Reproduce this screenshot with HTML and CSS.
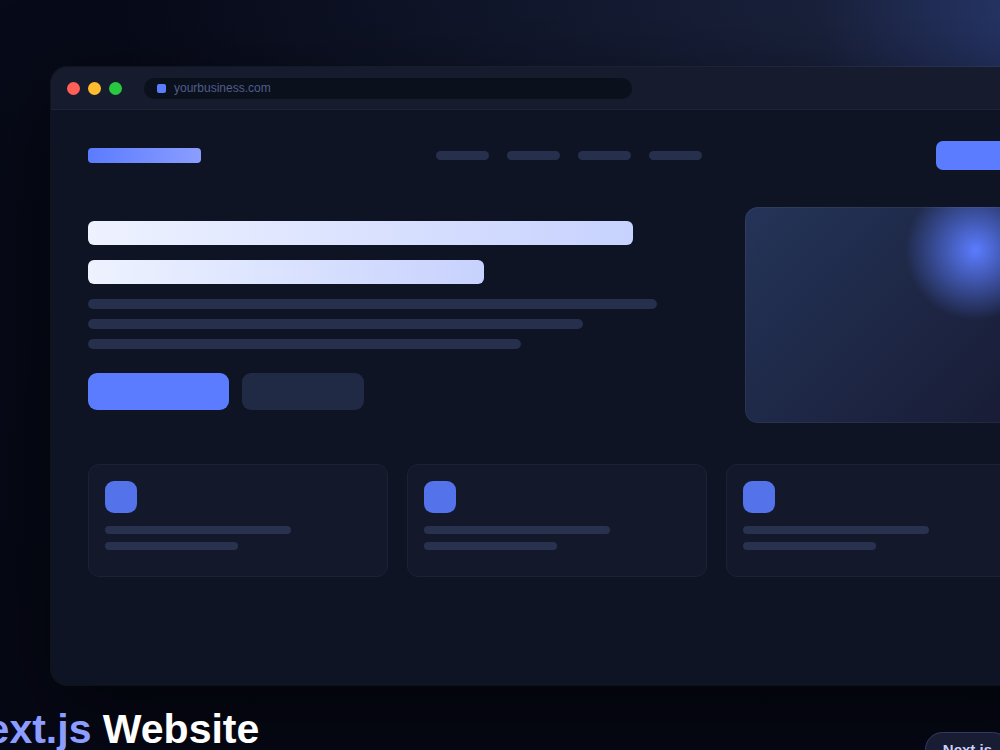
FILE: index.html
```html
<!DOCTYPE html>
<html lang="en">

<head>
  <meta charset="UTF-8">
  <meta name="viewport" content="width=device-width, initial-scale=1.0">
  <link rel="stylesheet" href="styles.css">
  <title>Next.js Website</title>
</head>

<body>
  <main class="stage">
    <div class="browser">
      <div class="bar">
        <div class="dots">
          <span class="dot red"></span>
          <span class="dot yellow"></span>
          <span class="dot green"></span>
        </div>
        <label class="url">
          <span class="favicon"></span>
          <input class="url-input" type="text" value="yourbusiness.com" aria-label="Address" readonly>
        </label>
      </div>

      <div class="site">
        <nav class="nav">
          <span class="logo"></span>
          <div class="links">
            <span class="link"></span>
            <span class="link"></span>
            <span class="link"></span>
            <span class="link"></span>
          </div>
          <button class="nav-btn" type="button" aria-label="Contact"></button>
        </nav>

        <section class="hero">
          <div class="copy">
            <span class="heading w88"></span>
            <span class="heading w64"></span>
            <div class="lines">
              <span class="line w92"></span>
              <span class="line w80"></span>
              <span class="line w70"></span>
            </div>
            <div class="actions">
              <button class="btn primary" type="button" aria-label="Start"></button>
              <button class="btn secondary" type="button" aria-label="More"></button>
            </div>
          </div>
          <div class="visual"></div>
        </section>

        <section class="cards">
          <div class="card">
            <span class="icon"></span>
            <span class="text w70"></span>
            <span class="text w50"></span>
          </div>
          <div class="card">
            <span class="icon"></span>
            <span class="text w70"></span>
            <span class="text w50"></span>
          </div>
          <div class="card">
            <span class="icon"></span>
            <span class="text w70"></span>
            <span class="text w50"></span>
          </div>
        </section>
      </div>
    </div>

    <footer class="caption">
      <h1 class="title"><span class="accent">Next.js</span> Website</h1>
      <span class="chip">Next.js</span>
    </footer>
  </main>
</body>

</html>
```

FILE: styles.css
```css
* {
  box-sizing: border-box;
}

body {
  margin: 0;
  background-color: #050612;
  font-family: "Liberation Sans", Arial, sans-serif;
}

/* the scene is wider than the window, the rest is cut off */
.stage {
  height: 100vh;
  overflow: hidden;
  padding-top: 66px;
  background:
    radial-gradient(circle 260px at 1080px 20px, rgba(60, 90, 200, 0.35), transparent),
    radial-gradient(ellipse 960px 560px at 1080px 0, rgba(62, 80, 130, 0.45), transparent),
    linear-gradient(180deg, #070a18, #060815);
}

.browser {
  margin: 0 -64px 0 50px;
  border: 1px solid rgba(255, 255, 255, 0.05);
  border-radius: 17px;
  background-color: #0e1423;
  background-clip: padding-box;
  box-shadow: 0 30px 90px rgba(0, 0, 0, 0.55);
  overflow: hidden;
}

.bar {
  display: flex;
  align-items: center;
  gap: 22px;
  height: 43px;
  padding: 0 16px;
  background-color: #161b2e;
  border-bottom: 1px solid #1e2336;
}

.dots {
  display: flex;
  gap: 8px;
}

.dot {
  width: 13px;
  height: 13px;
  border-radius: 50%;
}

.red {
  background-color: #ff5f57;
}

.yellow {
  background-color: #febc2e;
}

.green {
  background-color: #28c840;
}

.url {
  display: flex;
  align-items: center;
  gap: 8px;
  flex: 0 1 488px;
  height: 21px;
  padding: 0 13px;
  border-radius: 11px;
  background-color: #0b101d;
}

.favicon {
  width: 9px;
  height: 9px;
  border-radius: 2px;
  background-color: #5b7cff;
}

.url-input {
  flex: 1;
  min-width: 0;
  padding: 0;
  border: none;
  outline: none;
  background: none;
  color: #4f5d8a;
  font-family: inherit;
  font-size: 12px;
}

.site {
  padding: 31px 37px 108px;
}

.nav {
  display: flex;
  align-items: center;
  justify-content: space-between;
}

.logo {
  width: 113px;
  height: 15px;
  border-radius: 4px;
  background: linear-gradient(90deg, #5b7cff, #8b9dff);
}

.links {
  display: flex;
  gap: 18px;
}

.link {
  width: 53px;
  height: 9px;
  border-radius: 5px;
  background-color: #262f4c;
}

.nav-btn {
  width: 90px;
  height: 29px;
  padding: 0;
  border: none;
  border-radius: 7px;
  background-color: #5b7cff;
}

.hero {
  display: grid;
  grid-template-columns: 2.2fr 1fr;
  gap: 38px;
  align-items: center;
  margin-top: 37px;
}

.copy {
  display: flex;
  flex-direction: column;
  gap: 15px;
}

.heading {
  height: 24px;
  border-radius: 6px;
  background: linear-gradient(90deg, #eef2ff, #c7d2fe);
}

.lines {
  display: flex;
  flex-direction: column;
  gap: 10px;
}

.line {
  height: 10px;
  border-radius: 5px;
  background-color: #262f4c;
}

.actions {
  display: flex;
  gap: 13px;
  margin-top: 9px;
}

.btn {
  height: 37px;
  padding: 0;
  border: none;
  border-radius: 9px;
}

.primary {
  width: 141px;
  background-color: #5b7cff;
}

.secondary {
  width: 122px;
  background-color: #212a44;
}

.visual {
  height: 216px;
  border: 1px solid rgba(255, 255, 255, 0.05);
  border-radius: 13px;
  background:
    radial-gradient(circle 70px at 82% 20%, #5b7cff, rgba(91, 124, 255, 0)),
    linear-gradient(135deg, #243458, #181b34);
  background-origin: border-box;
}

.cards {
  display: grid;
  grid-template-columns: repeat(3, 1fr);
  gap: 19px;
  margin-top: 41px;
}

.card {
  display: flex;
  flex-direction: column;
  gap: 8px;
  padding: 16px 16px 26px;
  border: 1px solid #1c2135;
  border-radius: 11px;
  background-color: #13192b;
}

.icon {
  width: 32px;
  height: 32px;
  margin-bottom: 5px;
  border-radius: 9px;
  background-color: #5472ea;
}

.text {
  height: 8px;
  border-radius: 4px;
  background-color: #28314e;
}

.w92 {
  width: 92%;
}

.w88 {
  width: 88%;
}

.w80 {
  width: 80%;
}

.w70 {
  width: 70%;
}

.w64 {
  width: 64%;
}

.w50 {
  width: 50%;
}

.caption {
  display: flex;
  align-items: flex-start;
  justify-content: space-between;
  margin: 20px -10px 0 -43px;
}

.title {
  margin: 0;
  color: #fff;
  font-size: 41px;
  line-height: 46px;
  white-space: nowrap;
}

.accent {
  color: #8b9dff;
}

.chip {
  margin-top: 26px;
  padding: 8px 17px;
  border: 1px solid #34395f;
  border-radius: 20px;
  background-color: #191d33;
  color: #c7d2fe;
  font-size: 15px;
  font-weight: bold;
}
```
